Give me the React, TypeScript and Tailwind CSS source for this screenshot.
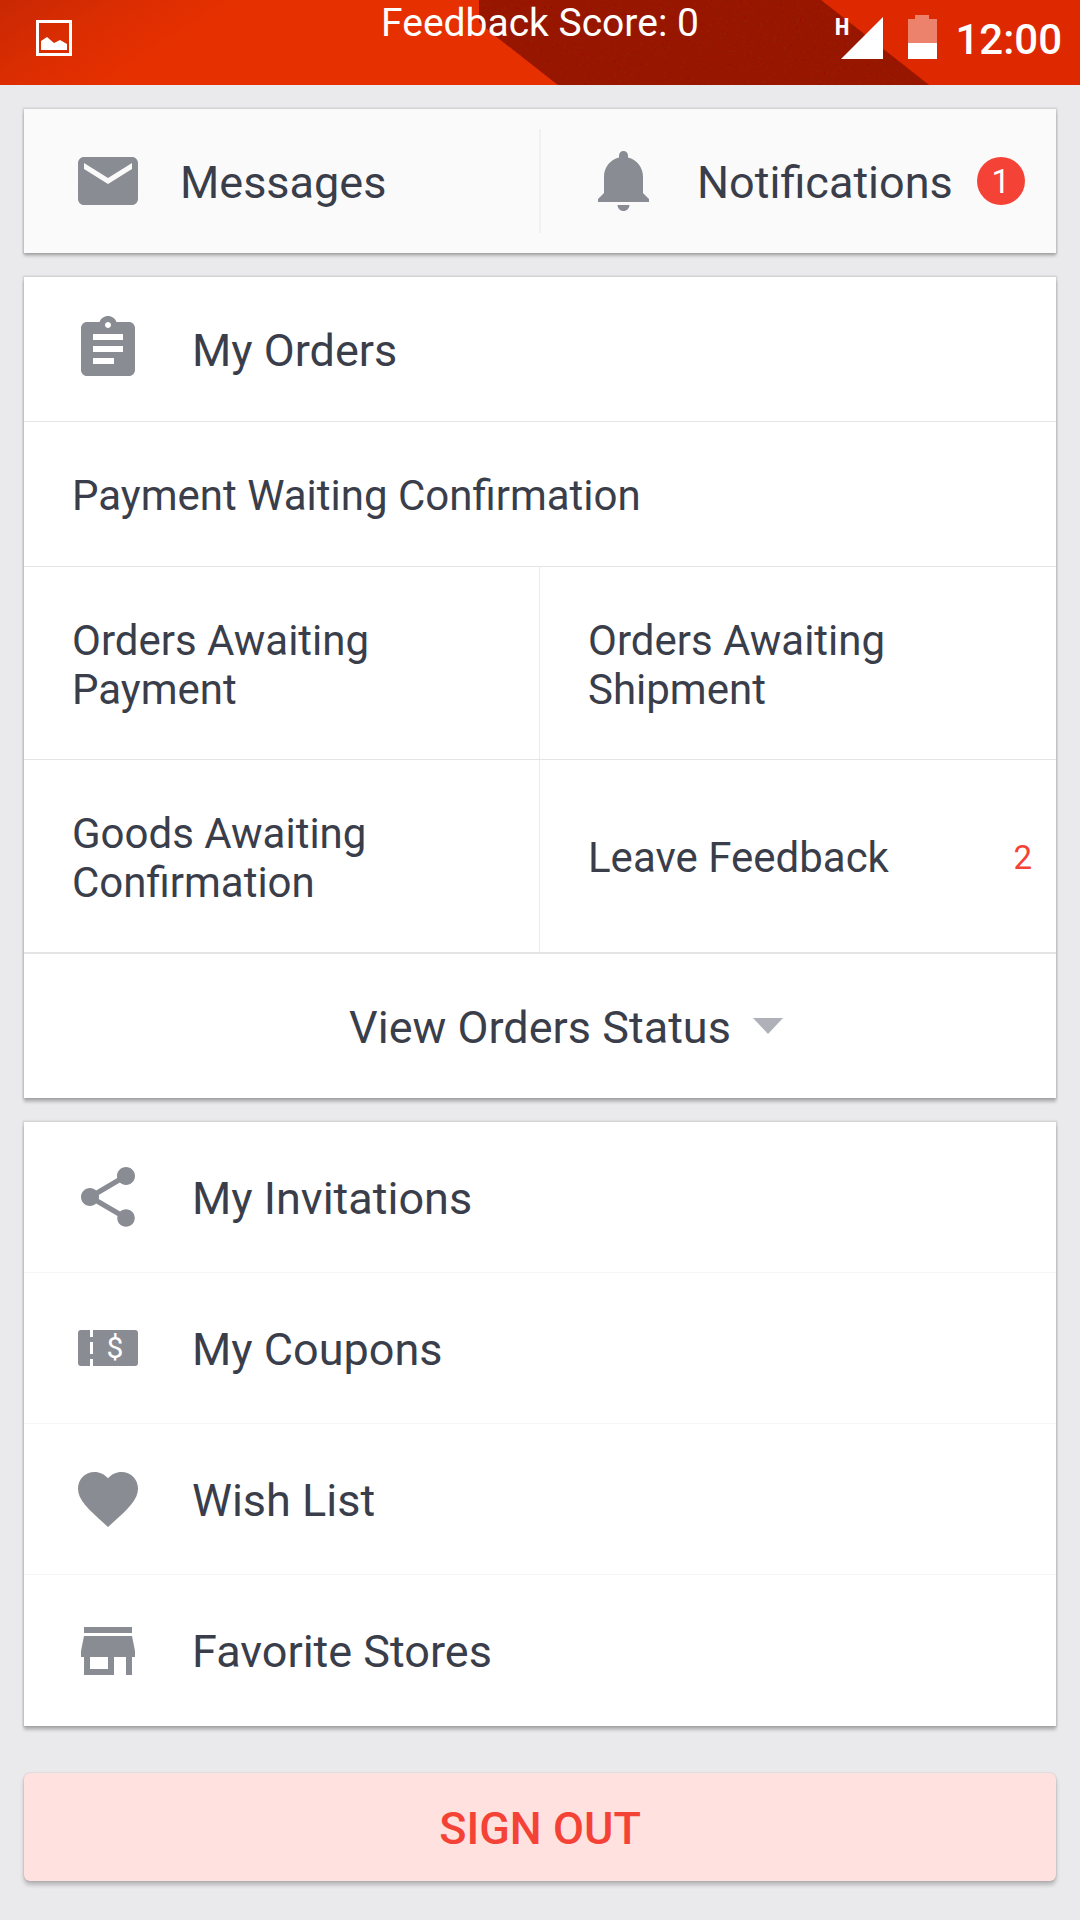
import React from "react";

function Icon({ d }: { d: string }) {
  return (
    <svg viewBox="0 0 24 24" className="size-18 shrink-0 fill-[#8a8c93]" aria-hidden="true">
      <path d={d} />
    </svg>
  );
}

const MAIL =
  "M20 4H4c-1.1 0-1.99.9-1.99 2L2 18c0 1.1.9 2 2 2h16c1.1 0 2-.9 2-2V6c0-1.1-.9-2-2-2zm0 4l-8 5-8-5V6l8 5 8-5v2z";
const BELL =
  "M11.5 22c1.1 0 2-.9 2-2h-4c0 1.1.9 2 2 2zm6.5-6v-5.5c0-3.07-2.13-5.64-5-6.32V3.5c0-.83-.67-1.5-1.5-1.5S10 2.67 10 3.5v.68c-2.87.68-5 3.25-5 6.32V16l-2 2v1h17v-1l-2-2z";
const CLIPBOARD =
  "M19 3h-4.18C14.4 1.84 13.3 1 12 1c-1.3 0-2.4.84-2.82 2H5c-1.1 0-2 .9-2 2v14c0 1.1.9 2 2 2h14c1.1 0 2-.9 2-2V5c0-1.1-.9-2-2-2zm-7 0c.55 0 1 .45 1 1s-.45 1-1 1-1-.45-1-1 .45-1 1-1zm2 14H7v-2h7v2zm3-4H7v-2h10v2zm0-4H7V7h10v2z";
const SHARE =
  "M18 16.08c-.76 0-1.44.3-1.96.77L8.91 12.7c.05-.23.09-.46.09-.7s-.04-.47-.09-.7l7.05-4.11c.54.5 1.25.81 2.04.81 1.66 0 3-1.34 3-3s-1.34-3-3-3-3 1.34-3 3c0 .24.04.47.09.7L8.04 9.81C7.5 9.31 6.79 9 6 9c-1.66 0-3 1.34-3 3s1.34 3 3 3c.79 0 1.5-.31 2.04-.81l7.12 4.16c-.05.21-.08.43-.08.65 0 1.61 1.31 2.92 2.92 2.92 1.61 0 2.92-1.31 2.92-2.92s-1.31-2.92-2.92-2.92z";
const HEART =
  "M12 21.35l-1.45-1.32C5.4 15.36 2 12.28 2 8.5 2 5.42 4.42 3 7.5 3c1.74 0 3.41.81 4.5 2.09C13.09 3.81 14.76 3 16.5 3 19.58 3 22 5.42 22 8.5c0 3.78-3.4 6.86-8.55 11.54L12 21.35z";
const STORE =
  "M20 4H4v2h16V4zm1 10v-2l-1-5H4l-1 5v2h1v6h10v-6h4v6h2v-6h1zm-9 4H6v-4h6v4z";

function CouponIcon() {
  return (
    <svg viewBox="0 0 72 72" className="size-18 shrink-0" aria-hidden="true">
      <rect x="6" y="18" width="60" height="36" rx="3" fill="#8a8c93" />
      <path d="M19.500 18v7m0 5v12m0 5v7" stroke="#fff" strokeWidth="3" />
      <text x="43" y="46" textAnchor="middle" fill="#fff" fontSize="30" fontFamily="Roboto, sans-serif">
        $
      </text>
    </svg>
  );
}

function StatusBar() {
  return (
    <header className="relative h-[85px] bg-[#e63000] text-white">
      <svg
        viewBox="0 0 1080 85"
        preserveAspectRatio="none"
        className="absolute inset-0 size-full"
        aria-hidden="true"
      >
        <defs>
          <linearGradient id="glow" gradientUnits="userSpaceOnUse" x1="0" y1="0" x2="70" y2="110">
            <stop offset="0" stopColor="#c82804" />
            <stop offset="0.5" stopColor="#da2d02" />
            <stop offset="1" stopColor="#e63000" />
          </linearGradient>
          <filter id="grain" x="0" y="0" width="100%" height="100%">
            <feTurbulence type="fractalNoise" baseFrequency="0.3" numOctaves="2" seed="3" />
            <feColorMatrix values="0 0 0 0 0.35  0 0 0 0 0  0 0 0 0 0  0.8 0 0 0 -0.25" />
            <feComposite in2="SourceGraphic" operator="in" result="n" />
            <feMerge>
              <feMergeNode in="SourceGraphic" />
              <feMergeNode in="n" />
            </feMerge>
          </filter>
        </defs>
        <path d="M0 0h480v85H0z" fill="url(#glow)" />
        <path d="M820 0h260v85H820z" fill="#de2900" />
        <path d="M479 0h342l108 85H558L498 38L479 22z" fill="#961c00" filter="url(#grain)" />
      </svg>
      <div className="relative grid grid-cols-3">
        <div className="pt-5 pl-9">
          <svg viewBox="0 0 36 36" className="size-9" aria-hidden="true">
            <rect x="1.500" y="1.500" width="33" height="33" fill="none" stroke="#fff" strokeWidth="3" />
            <path d="M5 30v-9l6-4 7 6 6-3 7 4v6z" fill="#fff" />
          </svg>
        </div>
        <p className="text-center text-[39px] leading-[46px] whitespace-nowrap">Feedback Score: 0</p>
        <div className="flex items-start justify-end pr-[18px]">
          <span className="mt-[15px] font-['Roboto_Condensed',Roboto,sans-serif] text-[24px] leading-6 font-bold">
            H
          </span>
          <svg viewBox="0 0 42 42" className="mt-[17px] -ml-2 size-[42px]" aria-hidden="true">
            <path d="M42 0v42H0z" fill="#fff" />
          </svg>
          <svg viewBox="0 0 29 44" className="mt-[15px] ml-[25px] h-11 w-[29px]" aria-hidden="true">
            <path d="M7 0h14v4h8v24H0V4h7z" fill="#fff" fillOpacity="0.42" />
            <path d="M0 28h29v16H0z" fill="#fff" />
          </svg>
          <time className="mt-[15px] ml-[18px] text-[42px] leading-[49px] font-medium">12:00</time>
        </div>
      </div>
    </header>
  );
}

const CARD =
  "mt-6 bg-white shadow-[0_0_2px_1px_rgba(0,0,0,0.15),0_4px_3px_rgba(0,0,0,0.22)]";

function MenuRow({ icon, label }: { icon: React.ReactNode; label: string }) {
  return (
    <button
      type="button"
      className="flex h-[151px] w-full items-center gap-12 px-12 text-left text-[45px] leading-[53px]"
    >
      {icon}
      <span className="pt-0.5">{label}</span>
    </button>
  );
}

function OrderCell({ label, count }: { label: string; count?: number }) {
  return (
    <button
      type="button"
      className="flex h-48 items-center justify-between pr-6 pl-12 text-left text-[42px] leading-[49px]"
    >
      <span className="max-w-80 pt-[3px]">{label}</span>
      {count !== undefined && (
        <span className="pt-[3px] text-[33px] leading-10 text-[#f44336]">{count}</span>
      )}
    </button>
  );
}

export default function App() {
  return (
    <div className="min-h-screen bg-[#eaeaec] font-[Roboto,sans-serif] text-[#3a3e4a]">
      <StatusBar />
      <main className="px-6 pb-[39px]">
        <section className="mt-6 grid grid-cols-[1fr_2px_1fr] bg-[#fafafa] text-[45px] leading-[53px] shadow-[0_0_2px_1px_rgba(0,0,0,0.15),0_3px_3px_rgba(0,0,0,0.22)]">
          <button type="button" className="flex h-36 items-center gap-9 pl-12">
            <Icon d={MAIL} />
            <span className="pt-0.5">Messages</span>
          </button>
          <div className="my-5 bg-[#f1f1f2]" />
          <button type="button" className="flex h-36 items-center pl-12">
            <Icon d={BELL} />
            <span className="ml-9 pt-0.5">Notifications</span>
            <span className="ml-6 flex size-12 items-center justify-center rounded-full bg-[#f44336] text-[33px] leading-10 text-white">
              <span className="pt-0.5">1</span>
            </span>
          </button>
        </section>

        <section className={CARD}>
          <button
            type="button"
            className="flex h-[145px] w-full items-center gap-12 border-b border-[#e4e4e6] px-12 text-left text-[45px] leading-[53px]"
          >
            <Icon d={CLIPBOARD} />
            <span className="pt-0.5">My Orders</span>
          </button>
          <button
            type="button"
            className="flex h-[145px] w-full items-center border-b border-[#e4e4e6] px-12 text-left text-[42px] leading-[49px]"
          >
            <span className="pt-0.5">Payment Waiting Confirmation</span>
          </button>
          <div className="grid grid-cols-2 divide-x divide-[#ececee] border-b border-[#e4e4e6]">
            <OrderCell label="Orders Awaiting Payment" />
            <OrderCell label="Orders Awaiting Shipment" />
          </div>
          <div className="grid grid-cols-2 divide-x divide-[#ececee] border-b-2 border-[#e4e4e6]">
            <OrderCell label="Goods Awaiting Confirmation" />
            <OrderCell label="Leave Feedback" count={2} />
          </div>
          <button
            type="button"
            className="flex h-36 w-full items-center justify-center gap-[22px] pl-[52px] text-[45px] leading-[53px]"
          >
            <span className="pt-0.5">View Orders Status</span>
            <svg viewBox="0 0 30 16" className="h-4 w-[30px]" aria-hidden="true">
              <path d="M0 0h30L15 16z" fill="#b0b1b8" />
            </svg>
          </button>
        </section>

        <nav className={CARD + " divide-y divide-[#f6f6f7]"}>
          <MenuRow icon={<Icon d={SHARE} />} label="My Invitations" />
          <MenuRow icon={<CouponIcon />} label="My Coupons" />
          <MenuRow icon={<Icon d={HEART} />} label="Wish List" />
          <MenuRow icon={<Icon d={STORE} />} label="Favorite Stores" />
        </nav>

        <button
          type="button"
          className="mt-[47px] h-[108px] w-full rounded-md bg-[#ffe1df] pt-1 text-[45px] font-medium text-[#f44336] shadow-[0_0_2px_rgba(0,0,0,0.2),0_4px_4px_rgba(0,0,0,0.22)]"
        >
          SIGN OUT
        </button>
      </main>
    </div>
  );
}
